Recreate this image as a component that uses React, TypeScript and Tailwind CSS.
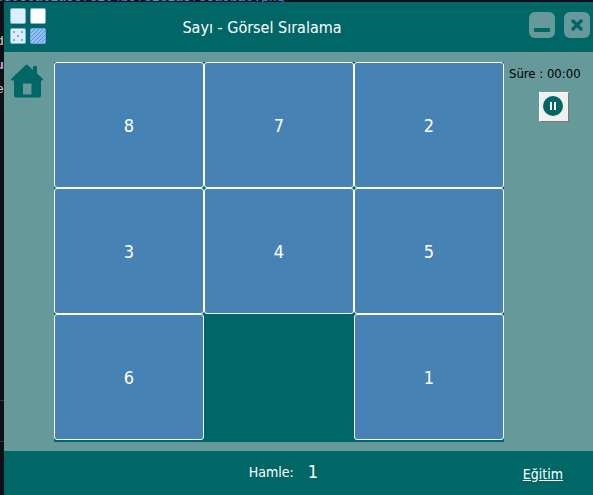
import React from "react";

const tiles = ["8", "7", "2", "3", "4", "5", "6", "", "1"];
const sans = "font-['DejaVu_Sans_Condensed','DejaVu_Sans',sans-serif]";

function Logo() {
  return (
    <svg width="38" height="38" viewBox="0 0 38 38" aria-hidden="true">
      <rect x="1.5" y="1.5" width="15" height="15" rx="1.5" fill="#dceeff" stroke="#7fb2dc" />
      <rect x="21.5" y="1.5" width="15" height="15" rx="1.5" fill="#ffffff" stroke="#7fb2dc" />
      <rect x="1.5" y="21.5" width="15" height="15" rx="1.5" fill="#dceeff" stroke="#7fb2dc" />
      <g fill="#7aaedf">
        <rect x="4" y="24" width="2" height="2" />
        <rect x="12" y="24" width="2" height="2" />
        <rect x="8" y="28" width="2" height="2" />
        <rect x="4" y="32" width="2" height="2" />
        <rect x="12" y="32" width="2" height="2" />
      </g>
      <rect x="21.5" y="21.5" width="15" height="15" rx="1.5" fill="#8fc0f3" stroke="#6ea4e0" />
      <path d="M22 26l4-4M22 30l8-8M22 34l12-12M24 36l12-12M28 36l8-8M32 36l4-4" stroke="#5b93d6" strokeWidth="1" />
    </svg>
  );
}

function House() {
  return (
    <svg width="34" height="34" viewBox="0 0 34 34" aria-hidden="true">
      <path
        fill="#006666"
        fillRule="evenodd"
        d="M17 .5L23 6V3q0-1 1-1h2q1 0 1 1v6.500l5.500 5q1 1 0 2H31v15q0 2-2 2H6q-2 0-2-2V16.500H1.500q-1-1 0-2L15.500 1.200Q16.500.3 17 .5ZM13 19.500V30.500h8.500V19.500Z"
      />
    </svg>
  );
}

export default function App() {
  return (
    <div className={`relative flex h-screen flex-col overflow-hidden bg-[#0d1117] pt-0.5 pl-1 ${sans}`}>
      <div className="absolute -top-2 -left-1 font-['Liberation_Mono',monospace] text-[13px] leading-3 whitespace-nowrap text-[#4f8ff0]">
        ed938ac1a5c7c204b9f82c2a3785a9ba0.png
      </div>
      <div className="absolute top-[400px] left-0 h-[42px] w-1 border-y border-[#30363d]" />
      <main className="relative flex min-h-0 flex-1 flex-col bg-[#669999] text-white">
        <header className="flex h-[50px] shrink-0 items-center bg-[#006666] pr-[3px] pl-[5px]">
          <div className="flex w-10 pb-0.5">
            <Logo />
          </div>
          <h1 className="flex-1 pt-0.5 pr-[54px] text-center text-[16px] leading-5">Sayı - Görsel Sıralama</h1>
          <div className="flex gap-[9px] pb-1">
            <button aria-label="Küçült" className="flex size-[26px] items-end justify-center rounded-md bg-[#669999] pb-1.5">
              <span className="h-1 w-4 rounded-[1px] bg-[#006666]" />
            </button>
            <button aria-label="Kapat" className="flex size-[26px] items-center justify-center rounded-md bg-[#669999]">
              <svg width="12" height="12" viewBox="0 0 12 12" aria-hidden="true">
                <path d="M2 2l8 8M10 2l-8 8" stroke="#006666" strokeWidth="3.400" strokeLinecap="round" />
              </svg>
            </button>
          </div>
        </header>
        <section className="flex min-h-0 flex-1">
          <nav className="w-[50px] shrink-0 pt-3 pl-1.5">
            <button aria-label="Ana sayfa" className="block">
              <House />
            </button>
          </nav>
          <div className="flex-1 pt-2.5 pb-[9px]">
            <div className="grid h-full grid-cols-3 grid-rows-3 bg-[#006666] pb-0.5">
              {tiles.map((n, i) =>
                n ? (
                  <button key={i} className="rounded-[3px] border border-white bg-[#4682b4] pt-0.5 text-[18px] leading-6">
                    {n}
                  </button>
                ) : (
                  <div key={i} />
                ),
              )}
            </div>
          </div>
          <aside className="flex w-[89px] shrink-0 flex-col pt-3.5 pl-[5px] text-black">
            <p className="text-[13px] leading-4 whitespace-nowrap">Süre : 00:00</p>
            <button
              aria-label="Duraklat"
              className="mt-2.5 ml-[30px] flex size-[30px] items-center justify-center border border-t-white border-r-[#777] border-b-[#777] border-l-white bg-[#f0f0f0] pr-0.5 pb-0.5"
            >
              <svg width="20" height="20" viewBox="0 0 20 20" aria-hidden="true">
                <circle cx="10" cy="10" r="10" fill="#006666" />
                <path d="M7 6h2v8H7zM11 6h2v8h-2z" fill="white" />
              </svg>
            </button>
          </aside>
        </section>
        <footer className="flex h-11 shrink-0 items-center justify-between bg-[#006666] pr-[30px]">
          <div className="w-10" />
          <p className="flex items-center gap-3.5 pb-0.5 text-[14px] leading-5">
            Hamle: <span className="text-[18px]">1</span>
          </p>
          <a href="#egitim" className="pt-0.5 text-[14px] leading-5 underline">
            Eğitim
          </a>
        </footer>
      </main>
      <div className="absolute top-9 left-0 w-1 overflow-hidden font-['Liberation_Mono',monospace] text-[13px] leading-6 text-[#e6d3c0]" aria-hidden="true">
        <span className="-ml-1 block h-6 leading-3">d</span>
        <span className="-ml-1 block h-6 leading-3 font-bold text-[#c9a8d8]">u</span>
        <span className="-ml-1 block h-6 leading-3">e</span>
      </div>
    </div>
  );
}
